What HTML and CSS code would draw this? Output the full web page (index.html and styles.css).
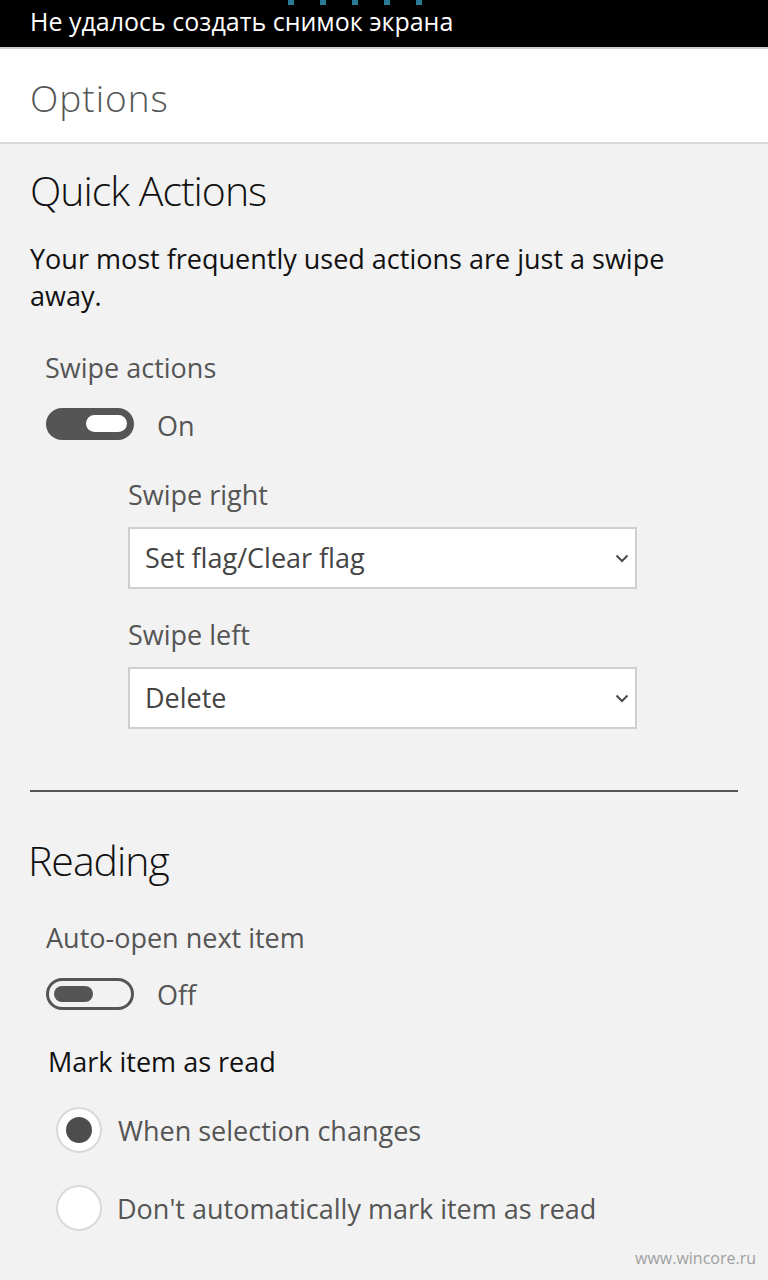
FILE: index.html
```html
<!DOCTYPE html>
<html lang="en">
<head>
<meta charset="utf-8">
<title>Options</title>
<link rel="stylesheet" href="styles.css">
</head>
<body>
<div class="screen">
  <div class="statusbar">
    <div class="marks"><span></span><span></span><span></span><span></span><span></span></div>
    <span class="status-text">Не удалось создать снимок экрана</span>
  </div>
  <header class="header"><h1 class="title">Options</h1></header>
  <main class="content">
    <h2 class="section-title">Quick Actions</h2>
    <p class="desc">Your most frequently used actions are just a swipe away.</p>
    <div class="label label-swipe">Swipe actions</div>
    <div class="toggle-row">
      <span class="toggle toggle-on"><span class="knob"></span></span>
      <span class="toggle-text">On</span>
    </div>
    <div class="sub">
      <div class="label sub-label first">Swipe right</div>
      <div class="select">
        <span class="select-text">Set flag/Clear flag</span>
        <svg class="chev" width="14" height="9" viewBox="0 0 14 9"><path d="M1.5 1.5 L7 7 L12.5 1.5" fill="none" stroke="#4a4a4a" stroke-width="2"/></svg>
      </div>
      <div class="label sub-label">Swipe left</div>
      <div class="select">
        <span class="select-text">Delete</span>
        <svg class="chev" width="14" height="9" viewBox="0 0 14 9"><path d="M1.5 1.5 L7 7 L12.5 1.5" fill="none" stroke="#4a4a4a" stroke-width="2"/></svg>
      </div>
    </div>
    <hr class="divider">
    <h2 class="section-title reading">Reading</h2>
    <div class="label label-auto">Auto-open next item</div>
    <div class="toggle-row toggle-row-off">
      <span class="toggle toggle-off"><span class="knob"></span></span>
      <span class="toggle-text">Off</span>
    </div>
    <div class="group-label">Mark item as read</div>
    <div class="radio-row first-radio">
      <span class="radio checked"><span class="dot"></span></span>
      <span class="radio-text">When selection changes</span>
    </div>
    <div class="radio-row second-radio">
      <span class="radio"></span>
      <span class="radio-text">Don't automatically mark item as read</span>
    </div>
  </main>
  <div class="watermark">www.wincore.ru</div>
</div>
</body>
</html>
```
FILE: styles.css
```css
* { box-sizing: border-box; }
html, body { margin: 0; padding: 0; }
body {
  background: #f2f2f2;
  font-family: "Segoe UI", "Open Sans", "Noto Sans", sans-serif;
  color: #555;
}
.screen {
  position: relative;
  width: 768px;
  height: 1280px;
  overflow: hidden;
  background: #f2f2f2;
}
.statusbar {
  position: relative;
  height: 49px;
  background: #000;
  border-bottom: 2px solid #cfcfcf;
  padding-left: 30px;
}
.status-text {
  display: block;
  color: #fff;
  font-size: 25px;
  line-height: 42px;
}
.marks { position: absolute; top: 0; left: 288px; display: flex; gap: 26px; }
.marks span { display: block; width: 6px; height: 5px; background: #2b7a96; }
.header {
  background: #fff;
  height: 95px;
  border-bottom: 2px solid #d9d9d9;
  padding: 29px 0 0 30px;
}
.title {
  margin: 0;
  font-size: 37px;
  line-height: 40px;
  font-weight: 300;
  letter-spacing: 1px;
  color: #555;
}
.content { padding: 0 30px; }
.section-title {
  margin: 20px 0 0;
  font-size: 41px;
  line-height: 52px;
  font-weight: 300;
  letter-spacing: -1px;
  color: #111;
}
.desc {
  margin: 24px 0 0;
  font-size: 27px;
  line-height: 37px;
  color: #111;
  width: 670px;
}
.label {
  font-size: 27px;
  line-height: 37px;
  color: #555;
}
.label-swipe { margin: 35px 0 0 15px; }
.toggle-row {
  display: flex;
  align-items: flex-start;
  margin: 22px 0 0 16px;
  height: 32px;
  gap: 23px;
}
.toggle {
  position: relative;
  display: block;
  width: 88px;
  height: 32px;
  border-radius: 16px;
}
.toggle-on { background: #555; }
.toggle-on .knob {
  position: absolute;
  left: 40px;
  top: 7px;
  width: 41px;
  height: 17px;
  border-radius: 9px;
  background: #fff;
}
.toggle-off { border: 3px solid #555; }
.toggle-off .knob {
  position: absolute;
  left: 5px;
  top: 5px;
  width: 39px;
  height: 16px;
  border-radius: 8px;
  background: #555;
}
.toggle-text {
  font-size: 27px;
  line-height: 32px;
  padding-top: 2px;
  color: #555;
}
.sub { margin-left: 98px; }
.sub-label { margin-top: 27px; }
.sub-label.first { margin-top: 36px; }
.select {
  display: flex;
  align-items: center;
  justify-content: space-between;
  margin-top: 14px;
  width: 509px;
  height: 62px;
  background: #fff;
  border: 2px solid #cfcfcf;
  padding: 0 6px 0 15px;
}
.select-text {
  font-size: 27px;
  line-height: 58px;
  color: #444;
}
.chev { display: block; }
.divider {
  margin: 61px 0 0;
  border: 0;
  height: 2px;
  background: #555;
}
.reading { margin: 42px 0 0 -2px; }
.label-auto { margin: 33px 0 0 16px; }
.toggle-row-off { margin-top: 22px; }
.toggle-row-off .toggle-text { padding-top: 1px; }
.group-label {
  margin: 33px 0 0 18px;
  font-size: 27px;
  line-height: 37px;
  color: #111;
}
.radio-row {
  display: flex;
  align-items: flex-start;
  margin-left: 26px;
  height: 46px;
  gap: 16px;
}
.first-radio { margin-top: 27px; }
.second-radio { margin-top: 32px; gap: 15px; }
.radio {
  position: relative;
  flex: none;
  width: 46px;
  height: 46px;
  border-radius: 50%;
  background: #fff;
  border: 2px solid #d9d9d9;
}
.radio .dot {
  position: absolute;
  left: 8px;
  top: 8px;
  width: 26px;
  height: 26px;
  border-radius: 50%;
  background: #4d4d4d;
}
.radio-text {
  font-size: 27px;
  line-height: 46px;
  padding-top: 1px;
  color: #555;
}
.watermark {
  position: absolute;
  right: 12px;
  bottom: 12px;
  font-size: 16px;
  line-height: 20px;
  color: #a0a0a0;
}
```
